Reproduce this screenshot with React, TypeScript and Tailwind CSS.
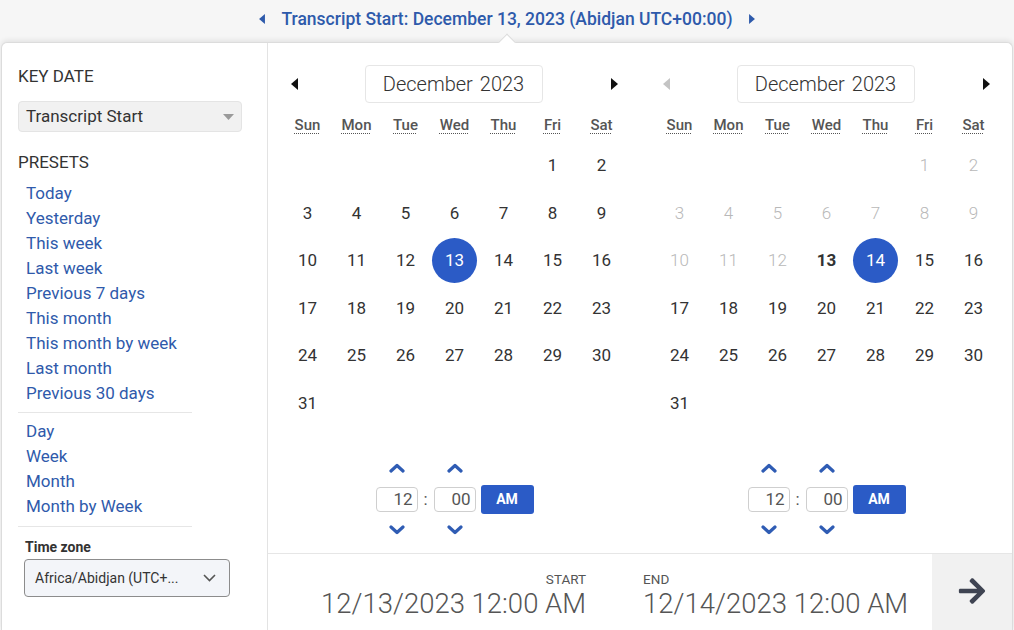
import React from 'react';
import { FaArrowRight } from 'react-icons/fa';

const presets = [
    'Today',
    'Yesterday',
    'This week',
    'Last week',
    'Previous 7 days',
    'This month',
    'This month by week',
    'Last month',
    'Previous 30 days',
];

const ranges = ['Day', 'Week', 'Month', 'Month by Week'];

const weekDays = ['Sun', 'Mon', 'Tue', 'Wed', 'Thu', 'Fri', 'Sat'];

// December 2023 starts on a Friday
const weeks: (number | null)[][] = [
    [null, null, null, null, null, 1, 2],
    [3, 4, 5, 6, 7, 8, 9],
    [10, 11, 12, 13, 14, 15, 16],
    [17, 18, 19, 20, 21, 22, 23],
    [24, 25, 26, 27, 28, 29, 30],
    [31, null, null, null, null, null, null],
];

const CaretLeft = ({ className }: { className: string }) => (
    <svg width="7" height="12" viewBox="0 0 7 12" className={className}>
        <polygon points="7,0 7,12 0,6" fill="currentColor" />
    </svg>
);

const CaretRight = ({ className }: { className: string }) => (
    <svg width="7" height="12" viewBox="0 0 7 12" className={className}>
        <polygon points="0,0 0,12 7,6" fill="currentColor" />
    </svg>
);

const ChevronUp = () => (
    <svg width="16" height="10" viewBox="0 0 16 10" className="text-[#2f5cb4]">
        <polyline points="2,8 8,2.5 14,8" fill="none" stroke="currentColor" strokeWidth="3.2" strokeLinecap="round" strokeLinejoin="round" />
    </svg>
);

const ChevronDown = () => (
    <svg width="16" height="10" viewBox="0 0 16 10" className="text-[#2f5cb4]">
        <polyline points="2,2 8,7.5 14,2" fill="none" stroke="currentColor" strokeWidth="3.2" strokeLinecap="round" strokeLinejoin="round" />
    </svg>
);

interface CalendarProps {
    selected: number;
    disabledBefore: number;
    bold?: number;
    prevDisabled?: boolean;
}

const Calendar: React.FC<CalendarProps> = ({ selected, disabledBefore, bold, prevDisabled }) => {
    return (
        <div className="w-[372px] pl-[15px] pt-[22px]">
            <div className="w-[343px]">
                {/* cabecera mes */}
                <div className="flex h-[38px] items-center justify-between">
                    <div className="flex w-[22px] justify-center">
                        <CaretLeft className={prevDisabled ? 'text-[#c4c4c4]' : 'text-[#111]'} />
                    </div>
                    <div className="flex h-[38px] w-[178px] items-center justify-center rounded-[4px] border border-[#e6e6e6] text-[20px] font-light text-[#333]">
                        <span>December</span>
                        <span className="ml-[7px]">2023</span>
                    </div>
                    <div className="flex w-[24px] justify-center">
                        <CaretRight className="text-[#111]" />
                    </div>
                </div>

                <div className="mt-[10px] grid h-[24px] grid-cols-7 items-center">
                    {weekDays.map((d) => (
                        <div key={d} className="text-center">
                            <span className="text-[15px] font-medium text-[#555] underline decoration-dotted decoration-[1px] underline-offset-[3px]">
                                {d}
                            </span>
                        </div>
                    ))}
                </div>

                <div className="mt-[5px]">
                    {weeks.map((week, i) => (
                        <div key={i} className="grid h-[47.5px] grid-cols-7 items-center">
                            {week.map((day, j) => (
                                <div key={j} className="flex justify-center">
                                    {day === null ? null : day === selected ? (
                                        <span className="flex h-[45px] w-[45px] items-center justify-center rounded-full bg-[#2b5bc6] text-[17px] text-white">
                                            {day}
                                        </span>
                                    ) : day < disabledBefore ? (
                                        <span className="text-[17px] font-light text-[#b8b8b8]">{day}</span>
                                    ) : day === bold ? (
                                        <span className="text-[17px] font-bold text-[#333]">{day}</span>
                                    ) : (
                                        <span className="text-[17px] text-[#333]">{day}</span>
                                    )}
                                </div>
                            ))}
                        </div>
                    ))}
                </div>

                {/* hora */}
                <div className="mt-[33px] flex justify-center">
                    <div className="flex flex-col">
                        <div className="flex h-[16px] items-center">
                            <div className="flex w-[42px] justify-center"><ChevronUp /></div>
                            <div className="w-[16px]" />
                            <div className="flex w-[42px] justify-center"><ChevronUp /></div>
                        </div>
                        <div className="mt-[9px] flex h-[29px] items-center">
                            <div className="flex h-[25px] w-[42px] items-center justify-end rounded-[4px] border border-[#cfcfcf] pr-[4px] text-[17px] text-[#555]">
                                12
                            </div>
                            <div className="w-[16px] text-center text-[17px] text-[#555]">:</div>
                            <div className="flex h-[25px] w-[42px] items-center justify-end rounded-[4px] border border-[#cfcfcf] pr-[4px] text-[17px] text-[#555]">
                                00
                            </div>
                            <div className="ml-[5px] flex h-[29px] w-[53px] items-center justify-center rounded-[3px] bg-[#2b5bc6] text-[14px] font-bold text-white">
                                AM
                            </div>
                        </div>
                        <div className="mt-[8px] flex h-[16px] items-center">
                            <div className="flex w-[42px] justify-center"><ChevronDown /></div>
                            <div className="w-[16px]" />
                            <div className="flex w-[42px] justify-center"><ChevronDown /></div>
                        </div>
                    </div>
                </div>
            </div>
        </div>
    );
};

const App: React.FC = () => {
    return (
        <div className="h-[630px] w-[1014px] overflow-hidden bg-[#f6f6f6] font-['Roboto','Liberation_Sans',sans-serif]">
            {/* barra superior */}
            <div className="flex h-[42px] items-center justify-center gap-[16px] pb-[4px] text-[#2e5aab]">
                <CaretLeft className="h-[10px] w-[6px]" />
                <span className="text-[17.5px] font-medium">Transcript Start: December 13, 2023 (Abidjan UTC+00:00)</span>
                <CaretRight className="h-[10px] w-[6px]" />
            </div>

            <div className="relative mx-[1px] flex h-[588px] rounded-t-[6px] border border-b-0 border-[#dcdcdc] bg-white shadow-[0_-2px_5px_rgba(0,0,0,0.08)]">
                <div className="absolute left-[499px] top-[-7px] h-[12px] w-[12px] rotate-45 border-l border-t border-[#dcdcdc] bg-white" />

                {/* lateral */}
                <div className="relative w-[266px] shrink-0 border-r border-[#e3e3e3] pl-[16px] pt-[23px]">
                    <div className="text-[17px] leading-[20px] text-[#333]">KEY DATE</div>
                    <div className="mt-[15px] flex h-[31px] w-[224px] items-center justify-between rounded-[4px] border border-[#e4e4e4] bg-[#f1f1f1] pl-[7px] pr-[7px] text-[17px] text-[#333]">
                        <span>Transcript Start</span>
                        <svg width="11" height="6" viewBox="0 0 11 6">
                            <polygon points="0,0 11,0 5.5,6" fill="#9a9a9a" />
                        </svg>
                    </div>
                    <div className="mt-[20px] text-[17px] leading-[20px] text-[#333]">PRESETS</div>
                    <ul className="mt-[9px] pl-[8px]">
                        {presets.map((p) => (
                            <li key={p} className="text-[17px] leading-[25px] text-[#2f5aab]">{p}</li>
                        ))}
                    </ul>
                    <div className="mt-[6px] w-[174px] border-t border-[#e6e6e6]" />
                    <ul className="mt-[6px] pl-[8px]">
                        {ranges.map((r) => (
                            <li key={r} className="text-[17px] leading-[25px] text-[#2f5aab]">{r}</li>
                        ))}
                    </ul>
                    <div className="mt-[7px] w-[174px] border-t border-[#e6e6e6]" />
                    <div className="ml-[7px] mt-[11px] text-[14px] font-bold leading-[18px] text-[#333]">Time zone</div>
                    <div className="ml-[6px] mt-[3px] flex h-[38px] w-[206px] items-center justify-between rounded-[4px] border border-[#8c8c8c] bg-[#f3f5f9] pl-[10px] pr-[13px] text-[14px] text-[#333]">
                        <span>Africa/Abidjan (UTC+...</span>
                        <svg width="13" height="8" viewBox="0 0 13 8">
                            <polyline points="1,1 6.5,6.5 12,1" fill="none" stroke="#555" strokeWidth="1.6" />
                        </svg>
                    </div>
                </div>

                {/* calendarios */}
                <div className="flex flex-1 flex-col">
                    <div className="flex h-[511px]">
                        <Calendar selected={13} disabledBefore={0} />
                        <Calendar selected={14} disabledBefore={13} bold={13} prevDisabled />
                    </div>
                    <div className="flex h-[77px] border-t border-[#e6e6e6]">
                        <div className="ml-[53px] flex flex-col items-end pt-[17px]">
                            <span className="text-[13.5px] leading-[16px] text-[#555]">START</span>
                            <span className="mt-[1px] text-[27.5px] font-light leading-[32px] text-[#555]">12/13/2023 12:00 AM</span>
                        </div>
                        <div className="ml-[57px] flex flex-col items-start pt-[17px]">
                            <span className="text-[13.5px] leading-[16px] text-[#555]">END</span>
                            <span className="mt-[1px] text-[27.5px] font-light leading-[32px] text-[#555]">12/14/2023 12:00 AM</span>
                        </div>
                        <div className="ml-auto flex w-[80px] items-center justify-center bg-[#f1f1f1] pb-[2px]">
                            <FaArrowRight className="h-[30px] w-[30px] text-[#3f4452]" />
                        </div>
                    </div>
                </div>
            </div>
        </div>
    );
};

export default App;
